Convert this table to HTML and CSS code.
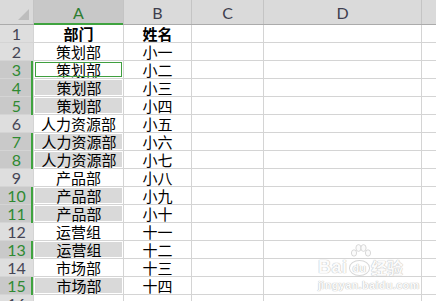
FILE: index.html
```html
<!DOCTYPE html>
<html lang="zh">
<head>
<meta charset="utf-8">
<title>Sheet</title>
<link rel="stylesheet" href="styles.css">
</head>
<body>
<div class="sheet">
  <div class="cols">
    <div class="ch corner"><svg class="tri" width="11" height="11" viewBox="0 0 11 11"><polygon points="11,0 11,11 0,11" fill="#bdbdbd"/></svg></div>
    <div class="ch sel">A</div>
    <div class="ch">B</div>
    <div class="ch">C</div>
    <div class="ch">D</div>
    <div class="ch"></div>
  </div>
  <div class="grid">
    <div class="rh">1</div><div class="c b">部门</div><div class="c b">姓名</div><div class="c"></div><div class="c"></div><div class="c"></div>
    <div class="rh">2</div><div class="c">策划部</div><div class="c">小一</div><div class="c"></div><div class="c"></div><div class="c"></div>
    <div class="rh sel">3</div><div class="c active">策划部</div><div class="c">小二</div><div class="c"></div><div class="c"></div><div class="c"></div>
    <div class="rh sel">4</div><div class="c fill">策划部</div><div class="c">小三</div><div class="c"></div><div class="c"></div><div class="c"></div>
    <div class="rh sel">5</div><div class="c fill">策划部</div><div class="c">小四</div><div class="c"></div><div class="c"></div><div class="c"></div>
    <div class="rh">6</div><div class="c">人力资源部</div><div class="c">小五</div><div class="c"></div><div class="c"></div><div class="c"></div>
    <div class="rh sel">7</div><div class="c fill">人力资源部</div><div class="c">小六</div><div class="c"></div><div class="c"></div><div class="c"></div>
    <div class="rh sel">8</div><div class="c fill">人力资源部</div><div class="c">小七</div><div class="c"></div><div class="c"></div><div class="c"></div>
    <div class="rh">9</div><div class="c">产品部</div><div class="c">小八</div><div class="c"></div><div class="c"></div><div class="c"></div>
    <div class="rh sel">10</div><div class="c fill">产品部</div><div class="c">小九</div><div class="c"></div><div class="c"></div><div class="c"></div>
    <div class="rh sel">11</div><div class="c fill">产品部</div><div class="c">小十</div><div class="c"></div><div class="c"></div><div class="c"></div>
    <div class="rh">12</div><div class="c">运营组</div><div class="c">十一</div><div class="c"></div><div class="c"></div><div class="c"></div>
    <div class="rh sel">13</div><div class="c fill">运营组</div><div class="c">十二</div><div class="c"></div><div class="c"></div><div class="c"></div>
    <div class="rh">14</div><div class="c">市场部</div><div class="c">十三</div><div class="c"></div><div class="c"></div><div class="c"></div>
    <div class="rh sel">15</div><div class="c fill">市场部</div><div class="c">十四</div><div class="c"></div><div class="c"></div><div class="c"></div>
    <div class="rh">16</div><div class="c"></div><div class="c"></div><div class="c"></div><div class="c"></div><div class="c"></div>
  </div>
  <div class="wm">
    <svg class="wm-paw" width="22" height="16" viewBox="0 0 22 16">
      <g fill="#fbfbfb" stroke="#cfcfcf" stroke-width="0.8">
        <ellipse cx="4" cy="9" rx="2.6" ry="3.2"/>
        <ellipse cx="8.5" cy="4" rx="2.6" ry="3.4"/>
        <ellipse cx="13.5" cy="4" rx="2.6" ry="3.4"/>
        <ellipse cx="18" cy="9" rx="2.6" ry="3.2"/>
      </g>
    </svg>
    <div class="wm-top"><span class="wm-bai">Bai</span><span class="wm-du">du</span><span class="wm-jy">经验</span></div>
    <div class="wm-url">jingyan.baidu.com</div>
  </div>
</div>
</body>
</html>
```
FILE: styles.css
```css
html, body {
  margin: 0;
  padding: 0;
  background: #fff;
}
.sheet {
  position: relative;
  width: 436px;
  height: 301px;
  overflow: hidden;
  background: #fff;
  font-family: "Noto Sans CJK SC", sans-serif;
}
.cols {
  display: grid;
  grid-template-columns: 33px 89px 67px 71px 157px 1fr;
  column-gap: 1px;
  height: 25px;
  box-sizing: border-box;
  background: #c4c4c4;
  border-bottom: 1px solid #ababab;
}
.ch {
  position: relative;
  background: #dadada;
  display: flex;
  align-items: center;
  justify-content: center;
  font-family: Lato, "Liberation Sans", sans-serif;
  font-size: 16px;
  color: #3e3e4e;
}
.ch.sel {
  background: #c8c8c8;
  color: #2f7d32;
}
.ch.sel::after {
  content: "";
  position: absolute;
  left: 0;
  right: 0;
  bottom: -1px;
  height: 2px;
  background: #3fa33f;
}
.corner {
  justify-content: flex-end;
  align-items: flex-end;
  padding: 0 4px 4px 0;
}
.tri {
  display: block;
}
.grid {
  display: grid;
  grid-template-columns: 33px 89px 67px 71px 157px 1fr;
  grid-auto-rows: 17px;
  gap: 1px;
  background: #d4d4d4;
}
.rh {
  position: relative;
  background: #dedede;
  text-align: center;
  font-family: Lato, "Liberation Sans", sans-serif;
  font-size: 16px;
  line-height: 17px;
  color: #454555;
}
.rh.sel {
  background: #c9c9c9;
  color: #2f8a32;
}
.rh.sel::after {
  content: "";
  position: absolute;
  right: 0;
  top: 0;
  bottom: -1px;
  width: 2px;
  background: #3fa33f;
}
.c {
  background: #fff;
  text-align: center;
  font-size: 15px;
  line-height: 17px;
  color: #000;
  white-space: nowrap;
  overflow: hidden;
}
.c.b {
  font-weight: 700;
}
.c.fill {
  background: #d9d9d9;
  background-clip: content-box;
  padding: 1px 1px 1px 2px;
  line-height: 15px;
  box-shadow: inset 0 0 0 1px #fff;
}
.c.active {
  outline: 1px solid #3f9f3f;
  outline-offset: -2px;
}
.wm {
  position: absolute;
  left: 318px;
  top: 244px;
  width: 92px;
  color: #fbfbfb;
  text-shadow: 0 0 1px #bdbdbd, 0 0 1px #bdbdbd;
  pointer-events: none;
}
.wm-paw {
  position: absolute;
  left: 32px;
  top: 0;
}
.wm-top {
  display: flex;
  align-items: center;
  height: 24px;
  margin-top: 11px;
  font-family: "Liberation Sans", sans-serif;
  font-weight: 700;
}
.wm-bai {
  font-size: 18px;
  letter-spacing: 0.5px;
}
.wm-du {
  font-size: 11px;
  margin: 2px 2px 0 2px;
  padding: 1px 3px;
  border-radius: 50%;
  box-shadow: 0 0 0 1px #d8d8d8;
}
.wm-jy {
  font-family: "Noto Sans CJK SC", sans-serif;
  font-size: 16px;
}
.wm-url {
  font-family: "Liberation Sans", sans-serif;
  font-size: 11px;
  font-weight: 700;
  margin-top: 0;
  letter-spacing: 0.3px;
}
```
